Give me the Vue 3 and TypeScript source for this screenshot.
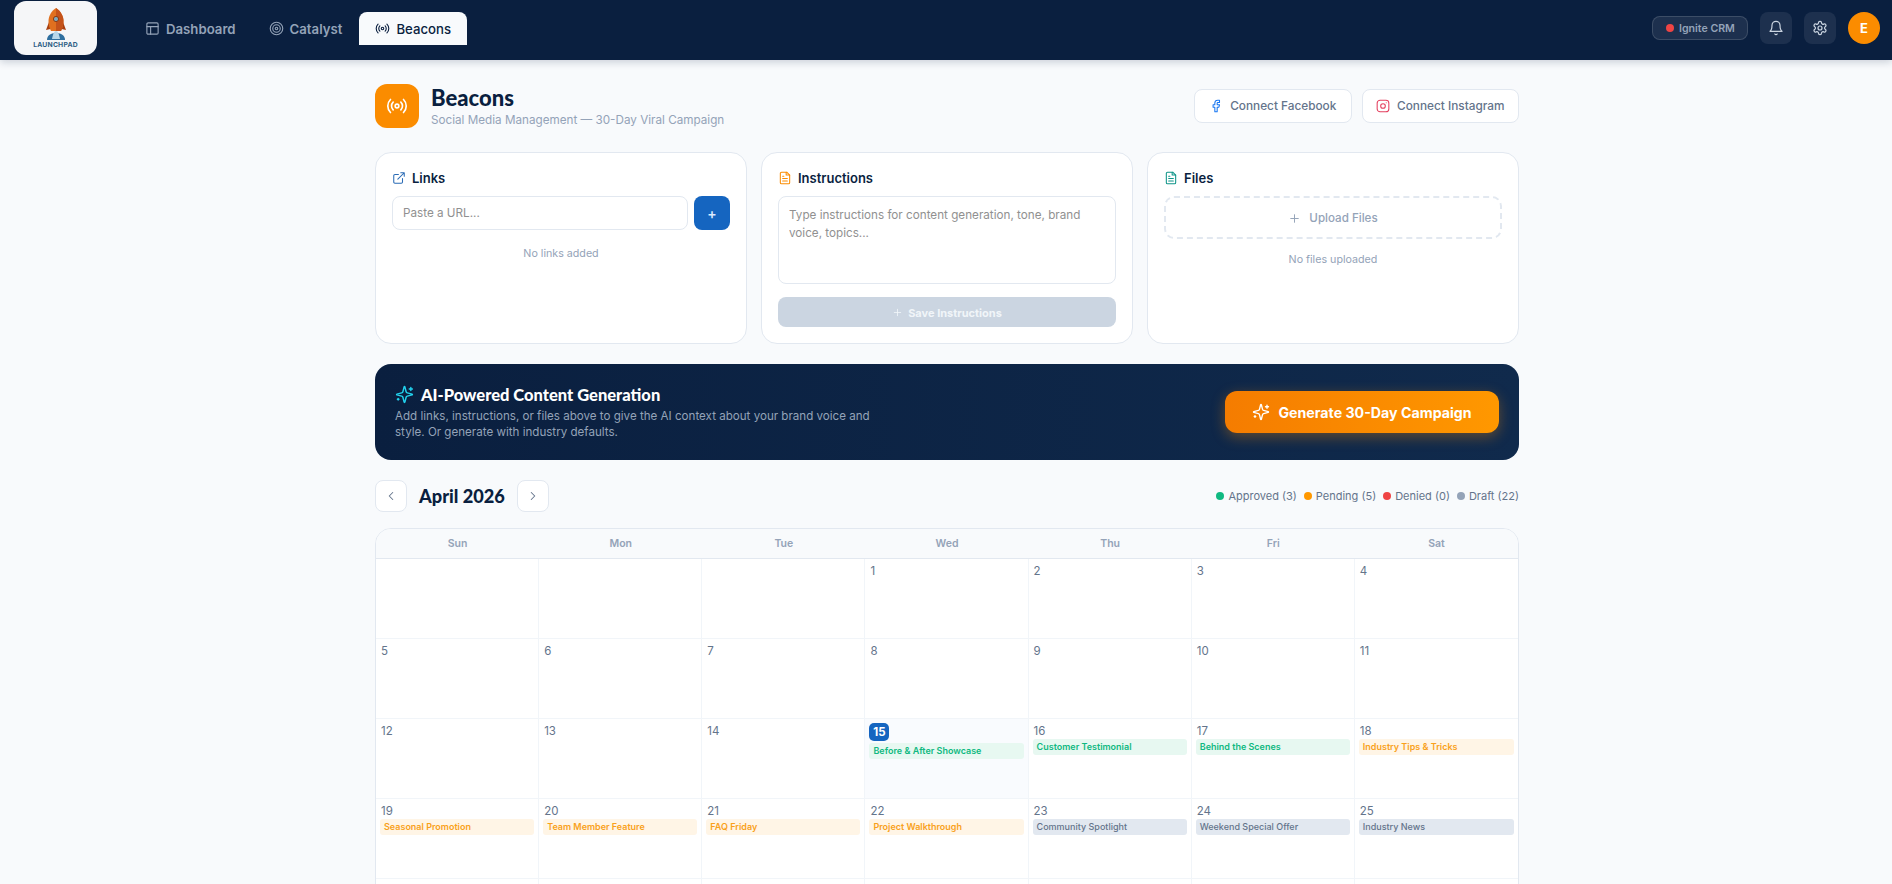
<script setup lang="ts">
interface Post {
  title: string
  status: 'approved' | 'pending' | 'draft'
}

const weekdays = ['Sun', 'Mon', 'Tue', 'Wed', 'Thu', 'Fri', 'Sat']
const today = 15

const posts: Record<number, Post> = {
  15: { title: 'Before & After Showcase', status: 'approved' },
  16: { title: 'Customer Testimonial', status: 'approved' },
  17: { title: 'Behind the Scenes', status: 'approved' },
  18: { title: 'Industry Tips & Tricks', status: 'pending' },
  19: { title: 'Seasonal Promotion', status: 'pending' },
  20: { title: 'Team Member Feature', status: 'pending' },
  21: { title: 'FAQ Friday', status: 'pending' },
  22: { title: 'Project Walkthrough', status: 'pending' },
  23: { title: 'Community Spotlight', status: 'draft' },
  24: { title: 'Weekend Special Offer', status: 'draft' },
  25: { title: 'Industry News', status: 'draft' },
}

// April 2026 starts on a Wednesday, so three blanks come first
const cells: (number | null)[] = [null, null, null]
for (let d = 1; d <= 30; d++) cells.push(d)
while (cells.length % 7 !== 0) cells.push(null)

const legend = [
  { label: 'Approved (3)', color: '#10b981' },
  { label: 'Pending (5)', color: '#ff9800' },
  { label: 'Denied (0)', color: '#ef4444' },
  { label: 'Draft (22)', color: '#94a3b8' },
]

const sparkles = 'M9.937 15.5A2 2 0 0 0 8.5 14.063l-6.135-1.582a.5.5 0 0 1 0-.962L8.5 9.936A2 2 0 0 0 9.937 8.5l1.582-6.135a.5.5 0 0 1 .963 0L14.063 8.5A2 2 0 0 0 15.5 9.937l6.135 1.581a.5.5 0 0 1 0 .964L15.5 14.063a2 2 0 0 0-1.437 1.437l-1.582 6.135a.5.5 0 0 1-.963 0zM20 3v4M22 5h-4M4 17v2M5 18H3'
</script>

<template>
  <div class="app">
    <header class="topbar">
      <div class="logo">
        <svg class="rocket" width="28" height="32" viewBox="0 0 28 32">
          <path d="M5 32c0-4 3-7 9-7s9 3 9 7z" fill="#2f6f9f" />
          <path d="M10 31c1-5 2-8 4-8s3 3 4 8z" fill="#b9d8ea" />
          <path d="M7 14l-3 8 4.500-1zM21 14l3 8-4.500-1z" fill="#a83f10" />
          <path d="M14 0c4.500 3 7.500 8 7.500 13 0 4-1 7-2.500 10H9c-1.500-3-2.500-6-2.500-10C6.500 8 9.500 3 14 0z" fill="#e0701f" />
          <path d="M14 0c4.500 3 7.500 8 7.500 13 0 4-1 7-2.500 10h-5z" fill="#c4521a" />
          <circle cx="14" cy="11" r="2.600" fill="#7fa7bb" stroke="#8c3b0f" />
        </svg>
        <span class="logo-text">LAUNCHPAD</span>
      </div>
      <nav class="tabs">
        <a class="tab">
          <svg width="15" height="15" viewBox="0 0 24 24" class="ico">
            <rect x="3" y="3" width="18" height="18" rx="2" />
            <path d="M3 9h18M9 21V9" />
          </svg>
          Dashboard
        </a>
        <a class="tab">
          <svg width="15" height="15" viewBox="0 0 24 24" class="ico">
            <circle cx="12" cy="12" r="10" />
            <circle cx="12" cy="12" r="6" />
            <circle cx="12" cy="12" r="2" />
          </svg>
          Catalyst
        </a>
        <a class="tab active">
          <svg width="15" height="15" viewBox="0 0 24 24" class="ico">
            <path d="M4.900 19.100a10 10 0 0 1 0-14.200M7.800 16.200a6 6 0 0 1 0-8.500M16.200 7.800a6 6 0 0 1 0 8.500M19.100 4.900a10 10 0 0 1 0 14.200" />
            <circle cx="12" cy="12" r="2" />
          </svg>
          Beacons
        </a>
      </nav>
      <div class="topbar-right">
        <div class="crm"><span class="crm-dot"></span>Ignite CRM</div>
        <button class="icon-btn">
          <svg width="16" height="16" viewBox="0 0 24 24" class="ico">
            <path d="M6 8a6 6 0 0 1 12 0c0 7 3 9 3 9H3s3-2 3-9" />
            <path d="M10.300 21a1.900 1.900 0 0 0 3.400 0" />
          </svg>
        </button>
        <button class="icon-btn">
          <svg width="16" height="16" viewBox="0 0 24 24" class="ico">
            <path d="M12.220 2h-.44a2 2 0 0 0-2 2v.18a2 2 0 0 1-1 1.730l-.43.250a2 2 0 0 1-2 0l-.15-.08a2 2 0 0 0-2.730.730l-.220.380a2 2 0 0 0 .730 2.730l.150.100a2 2 0 0 1 1 1.720v.510a2 2 0 0 1-1 1.740l-.150.090a2 2 0 0 0-.730 2.730l.220.380a2 2 0 0 0 2.730.730l.150-.08a2 2 0 0 1 2 0l.430.250a2 2 0 0 1 1 1.730V20a2 2 0 0 0 2 2h.440a2 2 0 0 0 2-2v-.18a2 2 0 0 1 1-1.730l.430-.250a2 2 0 0 1 2 0l.150.080a2 2 0 0 0 2.730-.730l.220-.390a2 2 0 0 0-.730-2.730l-.150-.080a2 2 0 0 1-1-1.740v-.500a2 2 0 0 1 1-1.740l.150-.090a2 2 0 0 0 .730-2.730l-.220-.380a2 2 0 0 0-2.730-.730l-.150.080a2 2 0 0 1-2 0l-.430-.250a2 2 0 0 1-1-1.730V4a2 2 0 0 0-2-2z" />
            <circle cx="12" cy="12" r="3" />
          </svg>
        </button>
        <div class="avatar">E</div>
      </div>
    </header>

    <main class="page">
      <div class="content">
        <section class="page-head">
          <div class="head-left">
            <div class="head-icon">
              <svg width="22" height="22" viewBox="0 0 24 24" class="ico">
                <path d="M4.900 19.100a10 10 0 0 1 0-14.200M7.800 16.200a6 6 0 0 1 0-8.500M16.200 7.800a6 6 0 0 1 0 8.500M19.100 4.900a10 10 0 0 1 0 14.200" />
                <circle cx="12" cy="12" r="2" />
              </svg>
            </div>
            <div>
              <h1>Beacons</h1>
              <p>Social Media Management — 30-Day Viral Campaign</p>
            </div>
          </div>
          <div class="head-actions">
            <button class="connect">
              <svg width="14" height="14" viewBox="0 0 24 24" class="ico fb">
                <path d="M18 2h-3a5 5 0 0 0-5 5v3H7v4h3v8h4v-8h3l1-4h-4V7a1 1 0 0 1 1-1h3z" />
              </svg>
              Connect Facebook
            </button>
            <button class="connect">
              <svg width="14" height="14" viewBox="0 0 24 24" class="ico ig">
                <rect x="2" y="2" width="20" height="20" rx="5" />
                <circle cx="12" cy="12" r="4" />
                <path d="M17.500 6.500h.01" />
              </svg>
              Connect Instagram
            </button>
          </div>
        </section>

        <section class="inputs">
          <div class="card">
            <h3>
              <svg width="14" height="14" viewBox="0 0 24 24" class="ico link-ico">
                <path d="M18 13v6a2 2 0 0 1-2 2H5a2 2 0 0 1-2-2V8a2 2 0 0 1 2-2h6M15 3h6v6M10 14 21 3" />
              </svg>
              Links
            </h3>
            <div class="url-row">
              <input class="field" placeholder="Paste a URL..." />
              <button class="add">+</button>
            </div>
            <p class="empty links-empty">No links added</p>
          </div>

          <div class="card">
            <h3>
              <svg width="14" height="14" viewBox="0 0 24 24" class="ico doc-orange">
                <path d="M15 2H6a2 2 0 0 0-2 2v16a2 2 0 0 0 2 2h12a2 2 0 0 0 2-2V7z" />
                <path d="M14 2v5h6M16 13H8M16 17H8M10 9H8" />
              </svg>
              Instructions
            </h3>
            <textarea class="field area" placeholder="Type instructions for content generation, tone, brand voice, topics..."></textarea>
            <button class="save">
              <svg width="11" height="11" viewBox="0 0 24 24" class="ico"><path d="M5 12h14M12 5v14" /></svg>
              Save Instructions
            </button>
          </div>

          <div class="card">
            <h3>
              <svg width="14" height="14" viewBox="0 0 24 24" class="ico doc-teal">
                <path d="M15 2H6a2 2 0 0 0-2 2v16a2 2 0 0 0 2 2h12a2 2 0 0 0 2-2V7z" />
                <path d="M14 2v5h6M16 13H8M16 17H8M10 9H8" />
              </svg>
              Files
            </h3>
            <div class="upload">
              <svg width="13" height="13" viewBox="0 0 24 24" class="ico"><path d="M5 12h14M12 5v14" /></svg>
              Upload Files
            </div>
            <p class="empty files-empty">No files uploaded</p>
          </div>
        </section>

        <section class="banner">
          <div>
            <h2>
              <svg width="19" height="19" viewBox="0 0 24 24" class="ico spark-teal"><path :d="sparkles" /></svg>
              AI-Powered Content Generation
            </h2>
            <p>Add links, instructions, or files above to give the AI context about your brand voice and style. Or generate with industry defaults.</p>
          </div>
          <button class="generate">
            <svg width="18" height="18" viewBox="0 0 24 24" class="ico"><path :d="sparkles" /></svg>
            Generate 30-Day Campaign
          </button>
        </section>

        <section class="cal-head">
          <div class="cal-nav">
            <button class="nav-btn">
              <svg width="14" height="14" viewBox="0 0 24 24" class="ico"><path d="m15 18-6-6 6-6" /></svg>
            </button>
            <h2>April 2026</h2>
            <button class="nav-btn">
              <svg width="14" height="14" viewBox="0 0 24 24" class="ico"><path d="m9 18 6-6-6-6" /></svg>
            </button>
          </div>
          <div class="legend">
            <span v-for="item in legend" :key="item.label" class="legend-item">
              <i :style="{ background: item.color }"></i>{{ item.label }}
            </span>
          </div>
        </section>

        <section class="calendar">
          <div class="weekdays">
            <div v-for="day in weekdays" :key="day">{{ day }}</div>
          </div>
          <div class="grid">
            <div v-for="(day, i) in cells" :key="i" class="cell" :class="{ today: day === today }">
              <template v-if="day">
                <span class="num">{{ day }}</span>
                <div v-if="posts[day]" class="post" :class="posts[day].status">{{ posts[day].title }}</div>
              </template>
            </div>
          </div>
        </section>
      </div>
    </main>
  </div>
</template>

<style>
html, body {
  margin: 0;
  background: #f8fafc;
}
</style>

<style scoped>
.app {
  height: 100vh;
  display: flex;
  flex-direction: column;
  overflow: hidden;
  font-family: Inter, "Noto Sans", sans-serif;
  color: #0a1f3f;
}
.ico {
  fill: none;
  stroke: currentColor;
  stroke-width: 1.8;
  stroke-linecap: round;
  stroke-linejoin: round;
  flex: none;
}

/* top bar */
.topbar {
  height: 60px;
  flex: none;
  background: #0a1f3f;
  display: flex;
  align-items: flex-start;
  padding: 0 12px 0 14px;
  box-shadow: 0 2px 8px rgba(10, 31, 63, 0.2);
  z-index: 2;
}
.logo {
  width: 83px;
  height: 54px;
  margin-top: 1px;
  background: #f5f6f8;
  border-radius: 12px;
  display: flex;
  flex-direction: column;
  align-items: center;
  padding-top: 7px;
  box-sizing: border-box;
}
.logo-text {
  font-size: 6.800px;
  font-weight: 700;
  letter-spacing: 0.2px;
  color: #2f5f85;
  line-height: 8px;
  margin-top: 1px;
}
.tabs {
  display: flex;
  margin: 12px 0 0 32px;
  gap: 1px;
}
.tab {
  height: 33px;
  display: flex;
  align-items: center;
  gap: 6px;
  padding: 0 16px;
  font-size: 13.200px;
  font-weight: 600;
  color: #94a3b8;
  border-radius: 8px 8px 0 0;
}
.tab.active {
  background: #f8fafc;
  color: #0a1f3f;
  font-weight: 500;
}
.topbar-right {
  margin-left: auto;
  display: flex;
  align-items: center;
  gap: 12px;
  height: 56px;
}
.crm {
  width: 96px;
  height: 24px;
  box-sizing: border-box;
  display: flex;
  align-items: center;
  gap: 5px;
  padding-left: 13px;
  font-size: 10.600px;
  font-weight: 600;
  color: #94a3b8;
  background: rgba(255, 255, 255, 0.08);
  border: 1px solid rgba(255, 255, 255, 0.14);
  border-radius: 8px;
}
.crm-dot {
  width: 8px;
  height: 8px;
  border-radius: 50%;
  background: #ef4444;
}
.icon-btn {
  width: 32px;
  height: 32px;
  padding: 0;
  border: 0;
  border-radius: 8px;
  background: rgba(255, 255, 255, 0.08);
  color: #cbd5e1;
  display: flex;
  align-items: center;
  justify-content: center;
}
.avatar {
  width: 32px;
  height: 32px;
  border-radius: 50%;
  background: #fb8c00;
  color: #fff;
  font-size: 13px;
  font-weight: 700;
  display: flex;
  align-items: center;
  justify-content: center;
}

/* page */
.page {
  flex: 1;
  min-height: 0;
  padding-left: 2px;
  overflow-y: auto;
  scrollbar-width: none;
}
.content {
  width: 1144px;
  margin: 0 auto;
  padding: 24px 0 24px;
}
.page-head {
  display: flex;
  justify-content: space-between;
  align-items: center;
  margin-bottom: 24px;
}
.head-left {
  display: flex;
  align-items: center;
  gap: 12px;
}
.head-icon {
  width: 44px;
  height: 44px;
  border-radius: 12px;
  background: #fb8c00;
  color: #fff;
  display: flex;
  align-items: center;
  justify-content: center;
}
h1 {
  margin: 0;
  font-family: Lato, sans-serif;
  font-size: 22px;
  font-weight: 900;
  line-height: 26px;
  color: #0a1f3f;
}
.head-left p {
  margin: 1px 0 0;
  font-size: 11.700px;
  line-height: 16px;
  color: #94a3b8;
}
.head-actions {
  display: flex;
  gap: 10px;
}
.connect {
  height: 34px;
  width: 157.500px;
  display: flex;
  align-items: center;
  justify-content: center;
  gap: 7px;
  background: #fff;
  border: 1px solid #e2e8f0;
  border-radius: 8px;
  font: 500 11.800px Inter, sans-serif;
  color: #64748b;
}
.fb { color: #1877f2; }
.ig { color: #e4405f; }

/* link / instructions / files */
.inputs {
  display: grid;
  grid-template-columns: repeat(3, 1fr);
  gap: 14px;
  height: 191px;
  margin-bottom: 21px;
}
.card {
  background: #fff;
  border: 1px solid #e2e8f0;
  border-radius: 16px;
  padding: 16px;
  display: flex;
  flex-direction: column;
}
h3 {
  margin: -1px 0 9px;
  height: 19px;
  display: flex;
  align-items: center;
  gap: 6px;
  font-size: 13px;
  font-weight: 600;
  color: #0a1f3f;
}
.link-ico { color: #2a6bb5; }
.doc-orange { color: #fb8c00; }
.doc-teal { color: #0d9488; }
.url-row {
  display: flex;
  gap: 6px;
}
.field {
  box-sizing: border-box;
  border: 1px solid #e2e8f0;
  border-radius: 8px;
  background: #fff;
  font: 400 11.700px Inter, sans-serif;
  color: #0a1f3f;
  padding: 0 10px;
  outline: none;
}
.url-row .field {
  flex: 1;
  min-width: 0;
  height: 34px;
}
.field::placeholder {
  color: #757575;
  opacity: 0.8;
}
.add {
  width: 36px;
  height: 34px;
  padding: 0;
  border: 0;
  border-radius: 8px;
  background: #1565c0;
  color: #dbeafe;
  font: 600 14px Inter, sans-serif;
}
.empty {
  margin: 0;
  text-align: center;
  font-size: 10.700px;
  color: #94a3b8;
}
.links-empty { margin-top: 17px; }
.files-empty { margin-top: 14px; }
.area {
  height: 88px;
  padding: 9px 10px;
  line-height: 18px;
  resize: none;
  width: 100%;
}
.save {
  margin-top: 13px;
  height: 30px;
  padding: 1px 0 0;
  display: flex;
  align-items: center;
  justify-content: center;
  gap: 5px;
  border: 0;
  border-radius: 8px;
  background: #cbd5e1;
  color: #f1f5f9;
  font: 700 11px Inter, sans-serif;
}
.upload {
  height: 43px;
  box-sizing: border-box;
  padding-top: 1px;
  border: 2px dashed #e2e8f0;
  border-radius: 10px;
  display: flex;
  align-items: center;
  justify-content: center;
  gap: 8px;
  font-size: 11.600px;
  font-weight: 500;
  color: #94a3b8;
}

/* banner */
.banner {
  height: 96px;
  box-sizing: border-box;
  padding: 0 20px;
  border-radius: 16px;
  background: linear-gradient(90deg, #0a1f3f, #102a4c);
  display: flex;
  align-items: center;
  justify-content: space-between;
  margin-bottom: 20px;
}
.banner h2 {
  margin: 0 0 3px;
  display: flex;
  align-items: center;
  gap: 7px;
  font-family: Lato, sans-serif;
  font-size: 16.500px;
  font-weight: 900;
  line-height: 20px;
  color: #fff;
}
.spark-teal { color: #22d3ee; }
.banner p {
  margin: 0;
  width: 490px;
  font-size: 11.600px;
  line-height: 16px;
  color: #94a3b8;
}
.generate {
  width: 274px;
  height: 42px;
  display: flex;
  align-items: center;
  justify-content: center;
  gap: 8px;
  border: 0;
  border-radius: 12px;
  background: linear-gradient(90deg, #f57c00, #ff9800);
  box-shadow: 0 4px 14px rgba(251, 140, 0, 0.35);
  color: #fff;
  font: 700 14.200px Inter, sans-serif;
}

/* calendar */
.cal-head {
  display: flex;
  justify-content: space-between;
  align-items: center;
  margin-bottom: 16px;
}
.cal-nav {
  display: flex;
  align-items: center;
  gap: 12px;
}
.cal-nav h2 {
  margin: 0;
  font-family: Lato, sans-serif;
  font-size: 18.200px;
  font-weight: 900;
  color: #0a1f3f;
}
.nav-btn {
  width: 32px;
  height: 32px;
  padding: 0;
  background: #fff;
  border: 1px solid #e2e8f0;
  border-radius: 8px;
  color: #64748b;
  display: flex;
  align-items: center;
  justify-content: center;
}
.legend {
  display: flex;
  gap: 7px;
  font-size: 11px;
  color: #64748b;
}
.legend-item {
  display: flex;
  align-items: center;
  gap: 4px;
}
.legend-item i {
  width: 8px;
  height: 8px;
  border-radius: 50%;
}
.calendar {
  border: 1px solid #e2e8f0;
  border-radius: 16px;
  overflow: hidden;
  background: #fff;
}
.weekdays {
  display: grid;
  grid-template-columns: repeat(7, 1fr);
  height: 29px;
  background: #f8fafc;
  border-bottom: 1px solid #e2e8f0;
}
.weekdays div {
  display: flex;
  align-items: center;
  justify-content: center;
  font-size: 10.500px;
  font-weight: 600;
  color: #94a3b8;
}
.grid {
  display: grid;
  grid-template-columns: repeat(7, 1fr);
}
.cell {
  height: 80px;
  box-sizing: border-box;
  padding: 5px 4px 0;
  border-right: 1px solid #f1f5f9;
  border-bottom: 1px solid #f1f5f9;
  min-width: 0;
}
.cell:nth-child(7n) {
  border-right: 0;
}
.cell.today {
  background: #f9fbfe;
}
.num {
  display: block;
  padding-left: 1px;
  font-size: 11.500px;
  line-height: 14px;
  height: 14px;
  margin-bottom: 1px;
  color: #64748b;
}
.today .num {
  width: 20px;
  height: 18px;
  padding: 0;
  margin: -1px 0 2px;
  border-radius: 5px;
  background: #1565c0;
  color: #fff;
  font-weight: 700;
  line-height: 18px;
  text-align: center;
}
.post {
  height: 16px;
  line-height: 16px;
  padding: 0 4px;
  border-radius: 3px;
  font-size: 9px;
  font-weight: 600;
  white-space: nowrap;
  overflow: hidden;
}
.approved {
  background: #e7f8f1;
  color: #10b981;
}
.pending {
  background: #fff5e6;
  color: #f9a11b;
}
.draft {
  background: #e2e8f0;
  color: #64748b;
  font-weight: 500;
}
</style>
